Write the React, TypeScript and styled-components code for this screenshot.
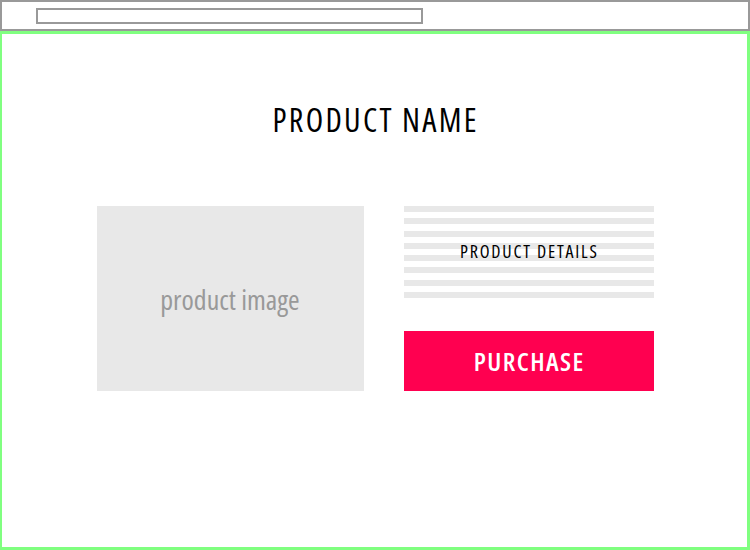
import styled, { createGlobalStyle } from 'styled-components';

const GlobalStyle = createGlobalStyle`
  html, body {
    margin: 0;
    padding: 0;
    background: #fff;
  }

  body {
    font-family: 'Open Sans', 'Noto Sans', sans-serif;
    font-stretch: 75%;
  }
`;

const STRIPE_COUNT = 8;

const App = () => (
  <>
    <GlobalStyle />
    <StyledBrowserBar>
      <StyledAddressBar />
    </StyledBrowserBar>
    <StyledFrame>
      <StyledTitle>PRODUCT NAME</StyledTitle>
      <StyledProductRow>
        <StyledImagePlaceholder>product image</StyledImagePlaceholder>
        <StyledDetailsColumn>
          <StyledDetails>
            {Array.from({ length: STRIPE_COUNT }, (_, i) => (
              <StyledStripe key={i} />
            ))}
            <StyledDetailsLabel>PRODUCT DETAILS</StyledDetailsLabel>
          </StyledDetails>
          <StyledPurchaseButton type="button">PURCHASE</StyledPurchaseButton>
        </StyledDetailsColumn>
      </StyledProductRow>
    </StyledFrame>
  </>
);

export default App;

const StyledBrowserBar = styled.div`
  box-sizing: border-box;
  height: 31px;
  padding: 6px 0 0 34px;

  border: 2px solid #999;
`;

const StyledAddressBar = styled.div`
  box-sizing: border-box;
  width: 387px;
  height: 16px;

  border: 2px solid #999;
`;

const StyledFrame = styled.div`
  display: flex;
  flex-direction: column;
  align-items: center;

  box-sizing: border-box;
  height: 519px;
  padding-top: 70px;

  border: 2px solid #80ff80;
  border-width: 3px 3px 3px 2px;
`;

const StyledTitle = styled.h1`
  margin: 0;
  padding-left: 2.3px;

  color: #000;
  font-size: 32px;
  font-weight: 500;
  letter-spacing: 2.3px;
  line-height: 32px;
`;

const StyledProductRow = styled.div`
  display: flex;
  gap: 40px;

  margin-top: 70px;
  margin-left: 1px;
`;

const StyledImagePlaceholder = styled.div`
  display: flex;
  align-items: center;
  justify-content: center;

  width: 267px;
  height: 185px;

  background: #e8e8e8;

  color: #999;
  font-size: 28px;
  font-weight: 500;
`;

const StyledDetailsColumn = styled.div`
  display: flex;
  flex-direction: column;
  gap: 33px;

  width: 250px;
`;

const StyledDetails = styled.div`
  display: flex;
  flex-direction: column;
  justify-content: space-between;

  position: relative;
  height: 92px;
`;

const StyledStripe = styled.div`
  height: 6px;

  background: #e8e8e8;
`;

const StyledDetailsLabel = styled.span`
  display: flex;
  align-items: center;
  justify-content: center;

  position: absolute;
  inset: 0 0 2px 1.8px;

  color: #000;
  font-size: 18px;
  font-weight: 500;
  letter-spacing: 1.8px;
`;

const StyledPurchaseButton = styled.button`
  height: 60px;
  padding: 0 0 0 1.4px;

  border: none;
  background: #ff0050;

  color: #fff;
  font-family: 'Open Sans', 'Noto Sans', sans-serif;
  font-size: 26px;
  font-weight: 600;
  font-stretch: 75%;
  letter-spacing: 1.4px;

  cursor: pointer;
`;
